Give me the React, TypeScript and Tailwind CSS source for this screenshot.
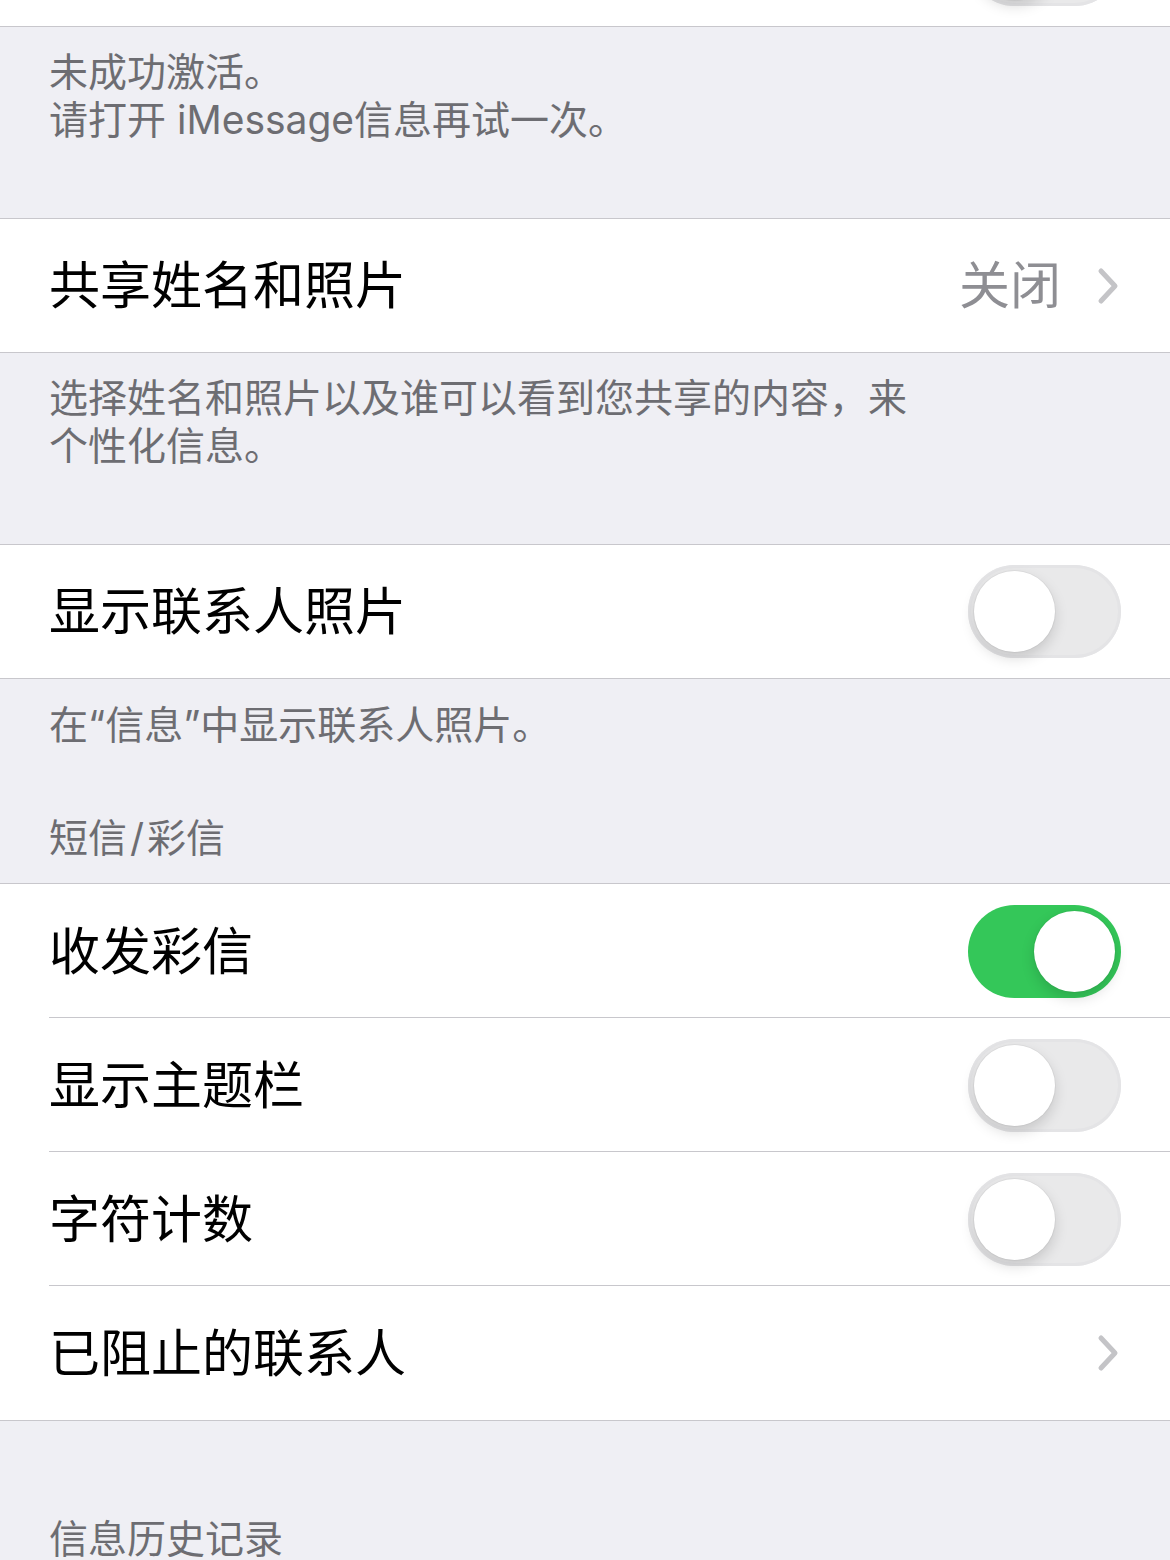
import React from 'react';

const FONT = { fontFamily: 'Inter, "Noto Sans CJK SC", sans-serif' };

function Toggle({ on }: { on?: boolean }) {
    return (
        <div
            className={`w-[153px] h-[93px] rounded-full p-[6px] flex items-center shrink-0 ${on
                ? 'bg-[#34c759] justify-end'
                : 'bg-[#e9e9ea] justify-start shadow-[inset_0_0_0_3px_#e4e4e6]'
                }`}
        >
            <div className="w-[81px] h-[81px] rounded-full bg-white shadow-[0_6px_14px_rgba(0,0,0,0.15),0_0_0_1px_rgba(0,0,0,0.04)]" />
        </div>
    );
}

function Chevron() {
    return (
        <svg width="22" height="38" viewBox="0 0 22 38" className="shrink-0">
            <path d="M4 4 L18 19 L4 34" fill="none" stroke="#c4c4c7" strokeWidth="5" strokeLinecap="round" strokeLinejoin="round" />
        </svg>
    );
}

function Row({ label, right, inset, tall }: { label: string; right?: React.ReactNode; inset?: boolean; tall?: boolean }) {
    return (
        <div className={`relative flex items-center justify-between pl-[49px] pr-[49px] ${tall ? 'h-[134px]' : 'h-[133px]'}`}>
            <span className="text-[51px] leading-none text-black">{label}</span>
            {right}
            {inset && <div className="absolute left-[49px] right-0 bottom-0 h-px bg-[#c8c7cc]" />}
        </div>
    );
}

function Footer({ children, className }: { children: React.ReactNode; className?: string }) {
    return (
        <div className={`px-[49px] text-[39px] leading-[48px] text-[#6d6d72] ${className ?? ''}`}>
            {children}
        </div>
    );
}

export default function App() {
    return (
        <div className="w-[1170px] h-[1560px] overflow-hidden bg-[#efeff4]" style={FONT}>
            {/* partial cell at top */}
            <div className="bg-white border-b border-[#c8c7cc] mt-[-108px]">
                <Row label="" right={<Toggle />} tall />
            </div>

            <Footer className="pt-[21px] pb-[74px]">
                未成功激活。<br />
                请打开 iMessage信息再试一次。
            </Footer>

            <div className="bg-white border-y border-[#c8c7cc]">
                <Row
                    label="共享姓名和照片"
                    right={
                        <div className="flex items-center gap-[36px] mr-[2px]">
                            <span className="text-[51px] leading-none text-[#8e8e93]">关闭</span>
                            <Chevron />
                        </div>
                    }
                />
            </div>

            <Footer className="pt-[21px] pb-[74px]">
                选择姓名和照片以及谁可以看到您共享的内容，来<br />
                个性化信息。
            </Footer>

            <div className="bg-white border-y border-[#c8c7cc]">
                <Row label="显示联系人照片" right={<Toggle />} />
            </div>

            <Footer className="pt-[22px]">在“信息”中显示联系人照片。</Footer>
            <Footer className="pt-[65px] pb-[21px]">
                短信<span className="px-[3px]">/</span>彩信
            </Footer>

            <div className="bg-white border-y border-[#c8c7cc]">
                <Row label="收发彩信" right={<Toggle on />} inset tall />
                <Row label="显示主题栏" right={<Toggle />} inset tall />
                <Row label="字符计数" right={<Toggle />} inset tall />
                <Row label="已阻止的联系人" right={<div className="mr-[2px]"><Chevron /></div>} tall />
            </div>

            <Footer className="pt-[94px]">信息历史记录</Footer>
        </div>
    );
}
